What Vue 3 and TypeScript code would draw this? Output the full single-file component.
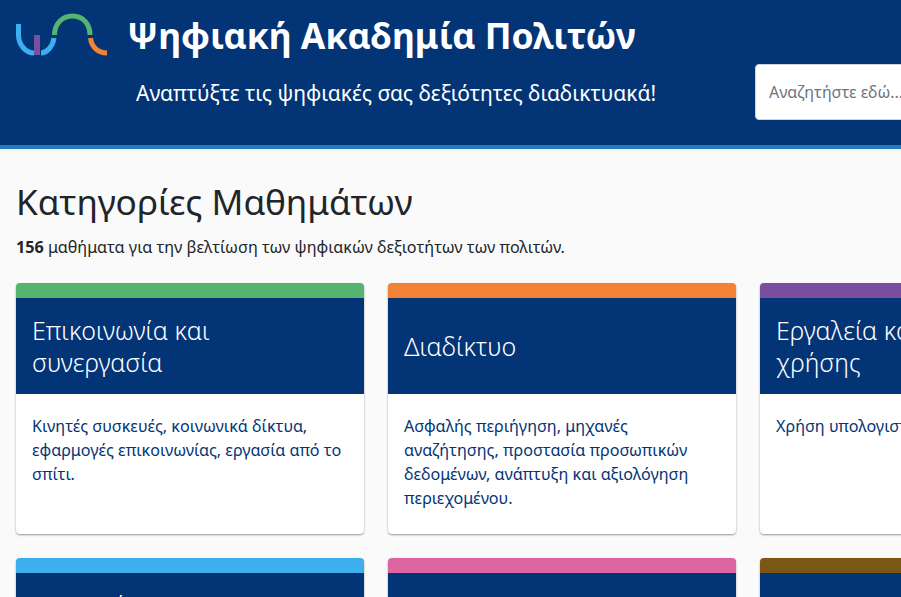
<script setup lang="ts">
interface Category { title: string; text: string; color: string }
const categories: Category[] = [
  { title: 'Επικοινωνία και συνεργασία', text: 'Κινητές συσκευές, κοινωνικά δίκτυα, εφαρμογές επικοινωνίας, εργασία από το σπίτι.', color: '#55b46e' },
  { title: 'Διαδίκτυο', text: 'Ασφαλής περιήγηση, μηχανές αναζήτησης, προστασία προσωπικών δεδομένων, ανάπτυξη και αξιολόγηση περιεχομένου.', color: '#f28235' },
  { title: 'Εργαλεία καθημερινής χρήσης', text: 'Χρήση υπολογιστή και εφαρμογών.', color: '#7a4fa0' },
  { title: 'Υπηρεσίες και διακυβέρνηση', text: 'Υπηρεσίες του δημοσίου.', color: '#3daeee' },
  { title: 'Ασφάλεια', text: 'Ασφάλεια συσκευών.', color: '#dd66a2' },
  { title: 'Επιχειρηματικότητα', text: 'Ψηφιακά εργαλεία.', color: '#7b5714' },
]
</script>

<template>
  <div class="page">
    <header class="hero">
      <div class="brand">
        <svg class="logo" width="92" height="44" viewBox="0 0 92 44" fill="none" stroke-width="5">
          <path d="M2.500 11V22C2.500 32 10 40 18 40" stroke="#3daeee" />
          <path d="M38 25C37 33 31 40 25 40" stroke="#3daeee" />
          <path d="M21 22V42" stroke="#7a4fa0" stroke-width="6" />
          <path d="M38.500 22C38.500 11 46 3 56.500 3C67 3 74 11 74 22" stroke="#55b46e" />
          <path d="M74.500 25C75.500 34 82 40 91 40" stroke="#f28235" />
        </svg>
        <h1 class="title">Ψηφιακή Ακαδημία Πολιτών</h1>
      </div>
      <div class="hero-row">
        <p class="subtitle">Αναπτύξτε τις ψηφιακές σας δεξιότητες διαδικτυακά!</p>
        <input class="search" type="text" placeholder="Αναζητήστε εδώ..." />
      </div>
    </header>
    <main class="content">
      <h2 class="heading">Κατηγορίες Μαθημάτων</h2>
      <p class="lead"><strong>156</strong> μαθήματα για την βελτίωση των ψηφιακών δεξιοτήτων των πολιτών.</p>
      <div class="grid">
        <article v-for="c in categories" :key="c.title" class="card" :style="{ borderTopColor: c.color }">
          <h3 class="card-title"><span>{{ c.title }}</span></h3>
          <p class="card-text">{{ c.text }}</p>
        </article>
      </div>
    </main>
  </div>
</template>

<style>
html, body { margin: 0; overflow: hidden; background: #fafafa; }
</style>

<style scoped>
.page {
  width: 1124px;
  font-family: "Noto Sans", "Open Sans", sans-serif;
  color: #212529;
}
.hero {
  height: 145px;
  background: #033476;
  border-bottom: 4px solid #2a7ab8;
  box-shadow: 0 1px 3px rgba(0, 0, 0, .08);
  color: #fff;
}
.brand {
  display: flex;
  align-items: flex-start;
  padding: 13px 0 0 16px;
}
.logo { flex: none; }
.title {
  margin: 0 0 0 19px;
  font-size: 35.500px;
  font-weight: 700;
  line-height: 44px;
}
.hero-row {
  display: flex;
  align-items: flex-start;
  margin-top: 7px;
  padding-left: 136px;
}
.subtitle {
  margin: 15px 0 0;
  width: 619px;
  font-size: 21px;
  line-height: 28px;
}
.search {
  width: 300px;
  height: 56px;
  box-sizing: border-box;
  padding: 0 13px;
  border: 1px solid #ced4da;
  border-radius: 4px;
  background: #fff;
  font-family: inherit;
  font-size: 16px;
}
.search::placeholder { color: #6c757d; opacity: 1; }
.content { padding: 26px 16px 0; }
.heading {
  margin: 0;
  font-size: 35.200px;
  font-weight: 400;
  line-height: 52px;
}
.lead {
  margin: 8px 0 0;
  font-size: 16.150px;
  line-height: 24px;
}
.grid {
  display: grid;
  grid-template-columns: repeat(3, 348px);
  gap: 24px;
  margin-top: 24px;
}
.card {
  display: flex;
  flex-direction: column;
  height: 251px;
  box-sizing: border-box;
  background: #fff;
  border-top: 15px solid;
  border-radius: 4px;
  box-shadow: 0 1px 2px rgba(0, 0, 0, .4);
}
.card-title {
  display: flex;
  align-items: center;
  height: 96px;
  flex: none;
  box-sizing: border-box;
  margin: 0;
  padding: 16px 40px 16px 16px;
  background: #033476;
  color: #fff;
  font-size: 25px;
  font-weight: 300;
  line-height: 32px;
}
.card-text {
  margin: 0;
  padding: 20px 16px;
  color: #033476;
  font-size: 16.150px;
  line-height: 24px;
}
</style>
